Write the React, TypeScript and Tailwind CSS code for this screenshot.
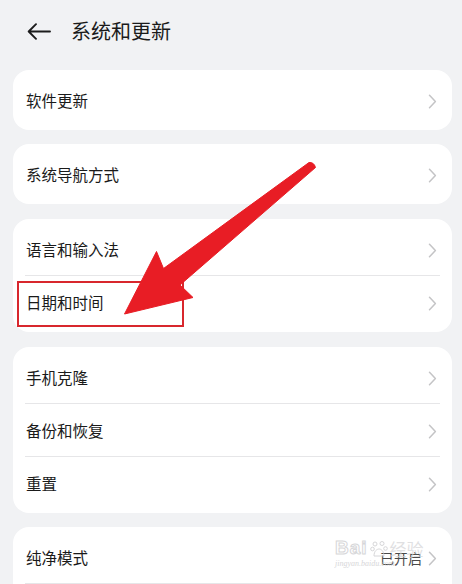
import React from "react";

const GROUPS: { label: string; value?: string }[][] = [
  [{ label: "软件更新" }],
  [{ label: "系统导航方式" }],
  [{ label: "语言和输入法" }, { label: "日期和时间" }],
  [{ label: "手机克隆" }, { label: "备份和恢复" }, { label: "重置" }],
  [{ label: "纯净模式", value: "已开启" }, { label: "" }],
];

function Chevron() {
  return (
    <svg width="9" height="15" viewBox="0 0 9 15" fill="none">
      <path
        d="M1.5 1.2 L7.4 7.5 L1.5 13.8"
        stroke="#c4c4c6"
        strokeWidth="1.5"
        strokeLinecap="round"
        strokeLinejoin="round"
      />
    </svg>
  );
}

function BackArrow() {
  return (
    <svg width="24" height="17" viewBox="0 0 24 17" fill="none">
      <path
        d="M23 8.5 H2 M9 1.2 L1.7 8.5 L9 15.8"
        stroke="#1c1c1c"
        strokeWidth="1.9"
        strokeLinecap="round"
        strokeLinejoin="round"
      />
    </svg>
  );
}

function Watermark() {
  return (
    <div className="pointer-events-none absolute left-[335px] top-[538px] flex flex-col opacity-70">
      <div className="flex items-end gap-[2px]">
        <span className="text-[19px] font-bold leading-none tracking-[1px] text-transparent [-webkit-text-stroke:1px_#c6c6c9] font-['Liberation_Sans',sans-serif]">
          Bai
        </span>
        <svg width="18" height="18" viewBox="0 0 18 18" fill="none" className="-mb-[1px]">
          <circle cx="5" cy="4" r="2" stroke="#c6c6c9" strokeWidth="1" />
          <circle cx="12" cy="3.5" r="2" stroke="#c6c6c9" strokeWidth="1" />
          <circle cx="2.5" cy="9" r="1.8" stroke="#c6c6c9" strokeWidth="1" />
          <circle cx="15.5" cy="8.5" r="1.8" stroke="#c6c6c9" strokeWidth="1" />
          <path d="M4 16 C4 11 7 9 9 9 C11 9 14 11 14 16 Z" stroke="#c6c6c9" strokeWidth="1" />
        </svg>
        <span className="text-[17px] leading-none text-[#d3d3d6]">经验</span>
      </div>
      <span className="mt-[3px] text-[8px] italic leading-none text-[#c6c6c9] font-['Liberation_Serif',serif]">
        jingyan.baidu.com
      </span>
    </div>
  );
}

export default function App() {
  return (
    <div className="relative h-[584px] w-[462px] overflow-hidden bg-[#f1f2f4] font-['Noto_Sans_CJK_SC','Noto_Sans',sans-serif] text-[#1a1a1a]">
      <header className="flex h-[62px] items-center pl-[27px]">
        <BackArrow />
        <span className="ml-[20px] text-[20px] leading-none">系统和更新</span>
      </header>

      <div className="ml-[13px] mt-[8px] flex w-[439px] flex-col gap-[14px]">
        {GROUPS.map((group, gi) => (
          <div
            key={gi}
            className={`rounded-[16px] bg-white py-[4px] ${gi === 2 || gi === 3 ? "mt-px" : ""}`}
          >
            {group.map((item, i) => (
              <div key={i}>
                {i > 0 && <div className="mx-[12px] h-px bg-[#e6e6e8]" />}
                <div className="flex h-[52px] items-center justify-between pl-[13px] pr-[15px] pt-[2px]">
                  <span className="text-[15.5px] leading-none">{item.label}</span>
                  {item.label && (
                    <div className="flex items-center gap-[6px]">
                      {item.value && (
                        <span className="text-[14px] leading-none text-[#4a4a4a]">{item.value}</span>
                      )}
                      <Chevron />
                    </div>
                  )}
                </div>
              </div>
            ))}
          </div>
        ))}
      </div>

      {/* annotation box */}
      <div className="pointer-events-none absolute left-[17px] top-[281px] h-[46px] w-[167px] border-2 border-[#d8272d]" />

      {/* annotation arrow */}
      <svg
        className="pointer-events-none absolute left-0 top-0"
        width="462"
        height="584"
        viewBox="0 0 462 584"
      >
        <path
          d="M309 162.5 Q314 162 315.5 167.5 L180 285 L193 297.5 L124.5 314 L156.5 251.5 L163.5 268.5 Z"
          fill="#e81d25"
          stroke="#e81d25"
          strokeWidth="1"
          strokeLinejoin="round"
        />
      </svg>

      <Watermark />
    </div>
  );
}
